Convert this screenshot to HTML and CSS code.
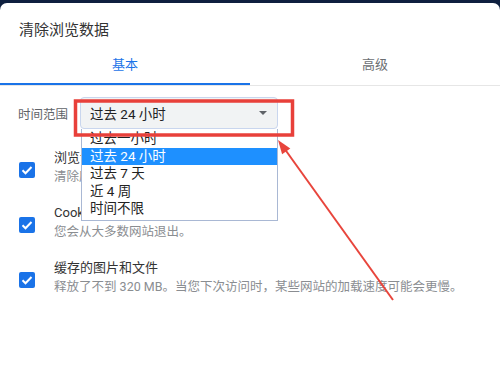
FILE: index.html
```html
<!DOCTYPE html>
<html lang="zh-CN">
<head>
    <meta charset="UTF-8">
    <meta name="viewport" content="width=device-width, initial-scale=1.0">
    <title>清除浏览数据</title>
    <link rel="stylesheet" href="styles.css">
</head>
<body>
    <div class="dialog">
        <div class="title">清除浏览数据</div>
        <div class="tabs">
            <div class="tab active">基本</div>
            <div class="tab">高级</div>
        </div>

        <div class="range">
            <span class="rangelabel">时间范围</span>
            <div class="selectwrap">
                <div class="select">
                    <span>过去 24 小时</span>
                    <span class="caret"></span>
                </div>
                <ul class="droplist">
                    <li>过去一小时</li>
                    <li class="picked">过去 24 小时</li>
                    <li>过去 7 天</li>
                    <li>近 4 周</li>
                    <li>时间不限</li>
                </ul>
            </div>
        </div>

        <div class="options">
            <div class="option">
                <span class="check"><svg viewBox="0 0 16 16" width="16" height="16"><path d="M3.5 8.3l3 3 6-6.3" fill="none" stroke="#fff" stroke-width="2"/></svg></span>
                <div>
                    <div class="optname">浏览记录</div>
                    <div class="optdesc">清除历史记录，包括搜索框中的内容</div>
                </div>
            </div>
            <div class="option">
                <span class="check"><svg viewBox="0 0 16 16" width="16" height="16"><path d="M3.5 8.3l3 3 6-6.3" fill="none" stroke="#fff" stroke-width="2"/></svg></span>
                <div>
                    <div class="optname">Cookie 及其他网站数据</div>
                    <div class="optdesc">您会从大多数网站退出。</div>
                </div>
            </div>
            <div class="option">
                <span class="check"><svg viewBox="0 0 16 16" width="16" height="16"><path d="M3.5 8.3l3 3 6-6.3" fill="none" stroke="#fff" stroke-width="2"/></svg></span>
                <div>
                    <div class="optname">缓存的图片和文件</div>
                    <div class="optdesc">释放了不到 320 MB。当您下次访问时，某些网站的加载速度可能会更慢。</div>
                </div>
            </div>
        </div>
    </div>

    <!-- red annotation drawn over the screenshot -->
    <svg class="markup" width="500" height="375" viewBox="0 0 500 375">
        <rect x="75.5" y="101" width="217" height="34" fill="none" stroke="#e8403a" stroke-width="3.5"/>
        <line x1="393" y1="300" x2="284" y2="148" stroke="#e8453c" stroke-width="2"/>
        <polygon points="278,140 290.3,148.5 282.1,154.3" fill="#e8453c"/>
    </svg>
</body>
</html>
```

FILE: styles.css
```css
body{
    margin: 0;
    background-color: #0e1f3f;
    overflow: hidden;
    font-family: Roboto, "Noto Sans CJK SC", sans-serif;
    color: #202124;
}

.dialog{
    position: relative;
    margin-top: 3px;
    height: 372px;
    background-color: #fff;
    border-radius: 7px 7px 0 0;
}

.title{
    padding: 16px 19px 0;
    font-size: 15px;
    line-height: 22px;
    color: #333;
}

.tabs{
    display: flex;
    border-bottom: 1px solid #e6e6e6;
}

.tab{
    flex: 1;
    text-align: center;
    padding-top: 14px;
    padding-bottom: 8px;
    font-size: 13px;
    line-height: 20px;
    color: #6b6e72;
    border-bottom: 2px solid transparent;
}

.tab.active{
    color: #1a73e8;
    border-bottom-color: #1a73e8;
}

.range{
    display: flex;
    align-items: center;
    margin-top: 11px;
    padding: 0 18px;
}

.rangelabel{
    width: 62px;
    font-size: 12.5px;
    color: #5f6368;
}

.selectwrap{
    position: relative;
    width: 198px;
}

.select{
    position: relative;
    z-index: 2;
    display: flex;
    justify-content: space-between;
    align-items: center;
    box-sizing: border-box;
    height: 32px;
    padding: 0 10px 0 9px;
    background-color: #f1f3f4;
    border: 1px solid #c9d6ee;
    border-radius: 4px;
    font-size: 13.5px;
    color: #202124;
}

.caret{
    width: 0;
    height: 0;
    border-left: 4px solid transparent;
    border-right: 4px solid transparent;
    border-top: 4px solid #5f6368;
}

.droplist{
    position: absolute;
    z-index: 3;
    top: 32px;
    left: 1px;
    right: 0;
    margin: 0;
    padding: 1px 0 2px;
    list-style: none;
    background-color: #fff;
    border: 1px solid #a9b8d4;
    border-top: none;
    font-size: 13.5px;
}

.droplist li{
    height: 17.5px;
    line-height: 17.5px;
    padding-left: 8px;
    color: #222;
}

.droplist li.picked{
    background-color: #1e90ff;
    color: #fff;
}

.options{
    margin-top: 19px;
    display: flex;
    flex-direction: column;
    gap: 17px;
}

.option{
    display: flex;
    align-items: flex-start;
    padding-left: 19px;
}

.check{
    width: 16px;
    height: 16px;
    margin-top: 14px;
    margin-right: 19px;
    border-radius: 2px;
    background-color: #1a73e8;
}

.check svg{
    display: block;
}

.optname{
    font-size: 13px;
    line-height: 19px;
    color: #333;
}

.optdesc{
    font-size: 12.5px;
    line-height: 19px;
    color: #8a8d91;
    white-space: nowrap;
}

.markup{
    position: absolute;
    top: 0;
    left: 0;
    z-index: 5;
    pointer-events: none;
}
```
